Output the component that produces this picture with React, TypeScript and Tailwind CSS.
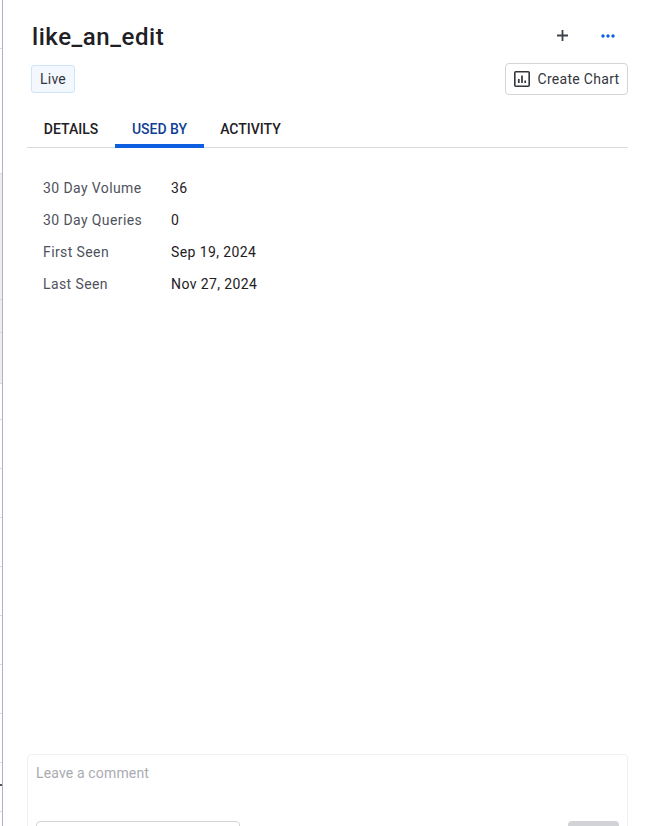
import React from "react";

const STATS = [
  { label: "30 Day Volume", value: "36" },
  { label: "30 Day Queries", value: "0" },
  { label: "First Seen", value: "Sep 19, 2024" },
  { label: "Last Seen", value: "Nov 27, 2024" },
];

const TICKS = [48, 173, 299, 332, 383, 419, 468, 517, 566, 615, 664, 713, 762, 811];

function ChartIcon() {
  return (
    <svg className="w-4 h-4 shrink-0" viewBox="0 0 16 16" fill="none" stroke="#33353b">
      <rect x="0.8" y="0.8" width="14.4" height="14.4" rx="1" strokeWidth="1.6" />
      <path d="M4.8 12V8M8 12V4.5M11.2 12V9.5" strokeWidth="1.7" />
    </svg>
  );
}

export default function App() {
  return (
    <div className="relative h-[826px] w-[652px] overflow-hidden bg-white font-['Roboto',sans-serif] text-[#1e2024]">
      {/* slice of the page behind the drawer */}
      <div className="absolute left-0 top-0 h-full w-[3px] border-r border-[#b4b2c2]">
        <div className="absolute left-0 top-[173px] h-[210px] w-[2px] bg-[#eeeef0]" />
        {TICKS.map((y) => (
          <div key={y} className="absolute left-0 h-px w-[2px] bg-[#dcdce0]" style={{ top: y }} />
        ))}
        <div className="absolute left-0 top-[784px] h-[2px] w-[2px] bg-[#55565c]" />
      </div>

      <div className="flex h-full flex-col pl-[27px] pr-6">
        {/* Header */}
        <div className="flex items-start justify-between pl-[5px] pt-[21px]">
          <h1 className="text-[24px] leading-[32px] font-medium tracking-[0.55px]">like_an_edit</h1>
          <div className="flex items-center gap-[33px] pr-[13px] pt-[9px]">
            <svg className="w-[11px] h-[11px]" viewBox="0 0 11 11" stroke="#3f424c" strokeWidth="1.8">
              <path d="M5.5 0v11M0 5.5h11" />
            </svg>
            <svg className="w-[14px] h-1" viewBox="0 0 14 4" fill="#0d5fe0">
              <circle cx="2" cy="2" r="1.7" />
              <circle cx="7" cy="2" r="1.7" />
              <circle cx="12" cy="2" r="1.7" />
            </svg>
          </div>
        </div>

        <div className="mt-[10px] flex items-start justify-between pl-1">
          <span className="mt-[2px] flex h-[28px] w-[44px] items-center justify-center rounded-[3px] border border-[#cfe4fb] bg-[#f3f8fe] text-[14px] tracking-[0.2px] text-[#33363d]">
            Live
          </span>
          <button className="flex h-[32px] w-[123px] items-center justify-center gap-[8px] rounded-[4px] border border-[#d4d5d9] bg-white text-[14px] tracking-[0.3px] text-[#33363d]">
            <ChartIcon />
            Create Chart
          </button>
        </div>

        {/* Tabs */}
        <div className="mt-[16px] flex h-[37px] border-b border-[#d9dadd] text-[14px] font-medium">
          <div className="flex w-[88px] items-center justify-center">DETAILS</div>
          <div className="mb-[-1px] flex w-[89px] items-center justify-center border-b-[4px] border-[#0d5fe0] pt-[3px] text-[#0f3f94]">USED BY</div>
          <div className="flex w-[93px] items-center justify-center">ACTIVITY</div>
        </div>

        {/* Stats */}
        <div className="mt-6 flex flex-col pl-4 text-[14px] tracking-[0.4px]">
          {STATS.map((s) => (
            <div key={s.label} className="flex h-[32px] items-center">
              <span className="w-[128px] text-[#4f525c]">{s.label}</span>
              <span className="text-[#1e2024]">{s.value}</span>
            </div>
          ))}
        </div>

        {/* Comment box */}
        <div className="mt-auto">
          <div className="mb-[-24px] flex h-[96px] flex-col rounded-t-[4px] border border-[#f0f0f2] px-2 pt-[9px]">
            <span className="text-[14px] leading-[18px] tracking-[0.15px] text-[#a9abb2]">Leave a comment</span>
            <div className="mt-auto flex items-start justify-between">
              <div className="h-[28px] w-[204px] rounded-[4px] border border-[#d4d5d9]" />
              <div className="h-[28px] w-[51px] rounded-[4px] bg-[#d2d3d7]" />
            </div>
          </div>
        </div>
      </div>
    </div>
  );
}
